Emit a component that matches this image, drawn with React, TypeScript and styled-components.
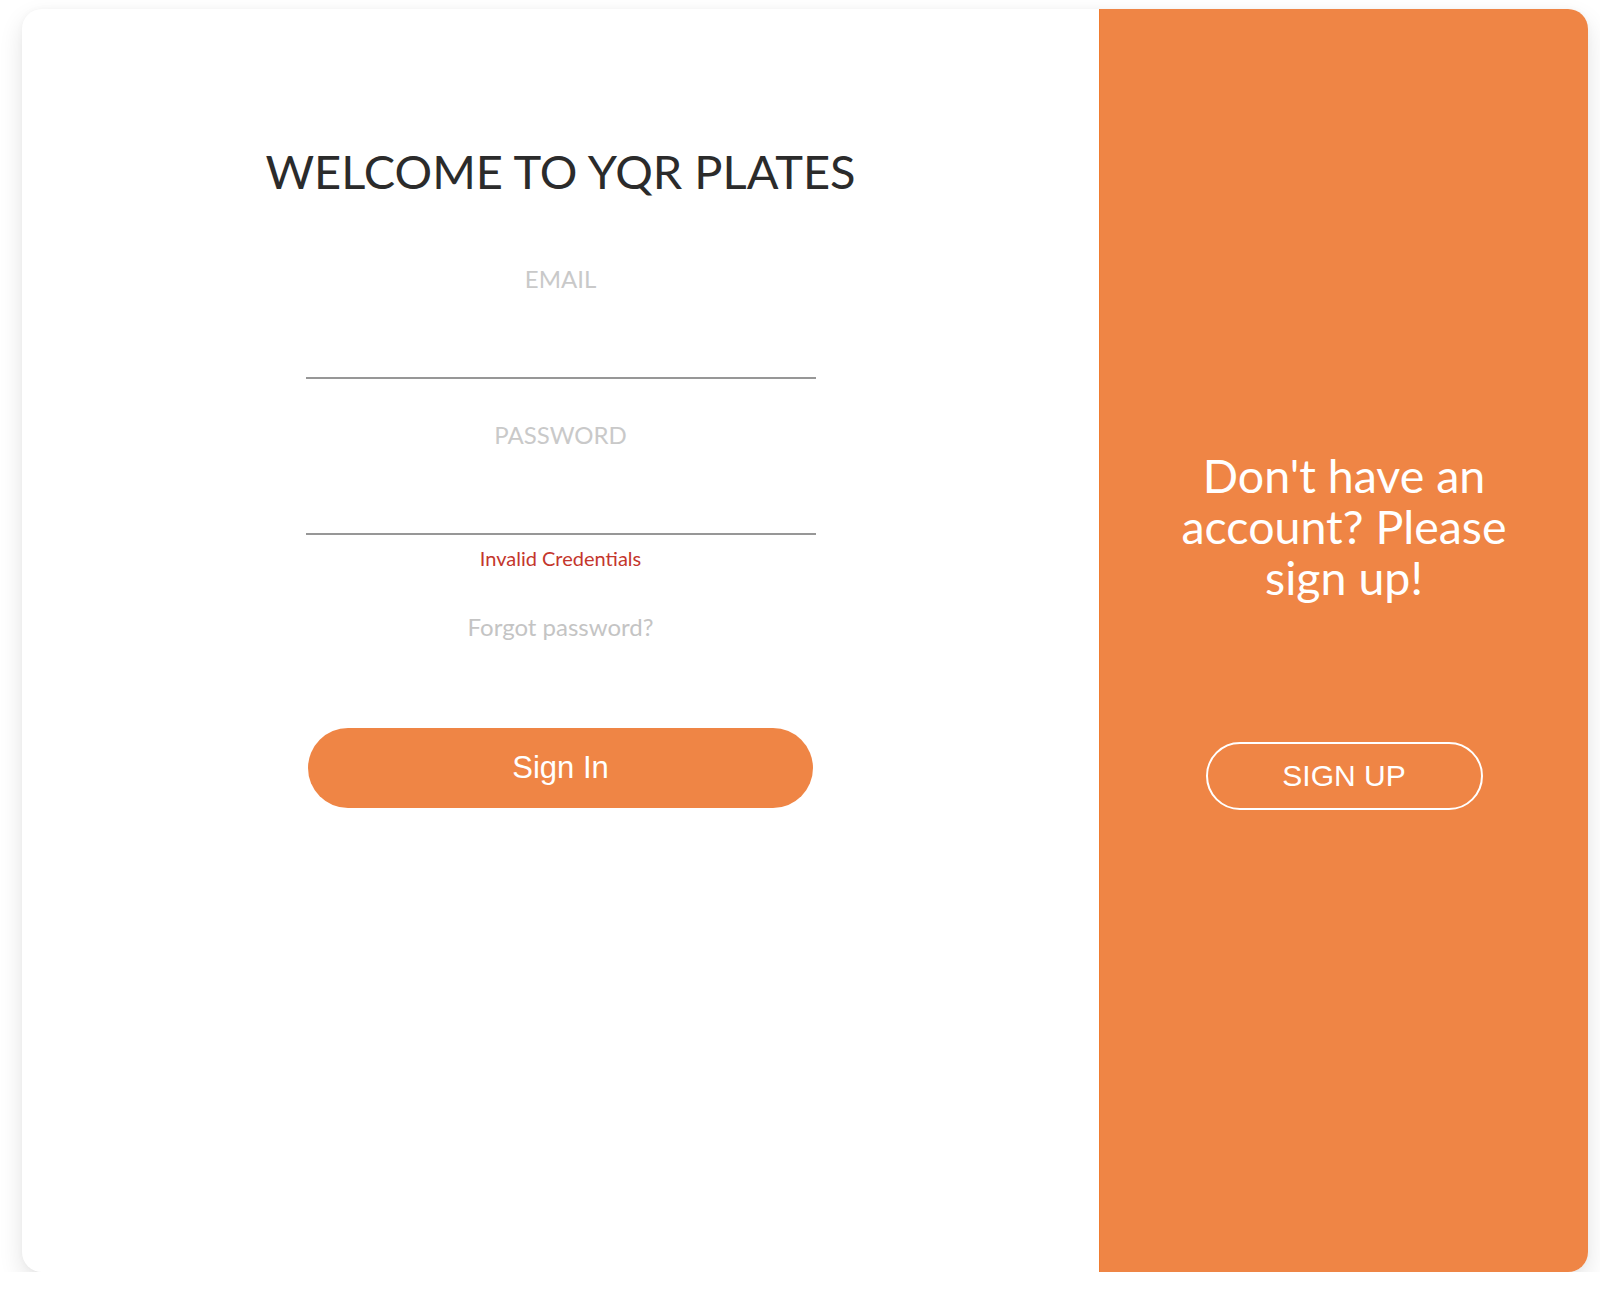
import React from "react";
import styled, { createGlobalStyle } from "styled-components";

const GlobalStyle = createGlobalStyle`
  html, body {
    margin: 0;
    padding: 0;
    background: #ffffff;
  }
  body {
    font-family: Lato, "Noto Sans", sans-serif;
  }
  * { box-sizing: border-box; }
`;

const Card = styled.div`
  display: flex;
  margin: 9px 12px 0 22px;
  height: 1263px;
  border-radius: 20px;
  overflow: hidden;
  background: #ffffff;
  box-shadow: 0 10px 24px rgba(0, 0, 0, 0.11), 0 0 6px rgba(0, 0, 0, 0.03);
`;

const SignInPane = styled.section`
  flex: 1;
  display: flex;
  flex-direction: column;
  align-items: center;
  padding-top: 134px;
`;

const Title = styled.h1`
  margin: 0 0 66px;
  font-family: Lato, sans-serif;
  font-weight: 400;
  font-size: 47px;
  line-height: 1.2;
  color: #2b2b2b;
`;

const Field = styled.label<{ $gap: number }>`
  display: flex;
  flex-direction: column;
  align-items: center;
  width: 510px;
  margin-top: ${(p) => p.$gap}px;
`;

const FieldLabel = styled.span`
  font-family: Lato, sans-serif;
  font-size: 24px;
  line-height: 1.2;
  color: #c9c9c9;
`;

const Input = styled.input`
  width: 100%;
  height: 85px;
  border: none;
  border-bottom: 2px solid #979797;
  background: transparent;
  outline: none;
  font-family: Lato, sans-serif;
  font-size: 22px;
  text-align: center;
`;

const ErrorText = styled.p`
  margin: 11px 0 0;
  font-family: Lato, sans-serif;
  font-size: 20px;
  line-height: 1.2;
  color: #c4362c;
`;

const ForgotLink = styled.a`
  margin-top: 43px;
  font-family: Lato, sans-serif;
  font-size: 24px;
  line-height: 1.2;
  color: #c4c4c4;
  text-decoration: none;
`;

const PrimaryButton = styled.button`
  margin-top: 86px;
  width: 505px;
  height: 80px;
  border: none;
  border-radius: 40px;
  background: #ef8545;
  color: #ffffff;
  font-family: "Liberation Sans", Arial, sans-serif;
  font-size: 31px;
  cursor: pointer;
`;

const SignUpPane = styled.aside`
  width: 489px;
  display: flex;
  flex-direction: column;
  align-items: center;
  padding-top: 441px;
  background: #ef8545;
  border-left: 1px solid #f07c30;
`;

const Promo = styled.h2`
  margin: 0;
  width: 350px;
  font-family: Lato, sans-serif;
  font-weight: 400;
  font-size: 46.5px;
  line-height: 51px;
  text-align: center;
  color: #ffffff;
`;

const OutlineButton = styled.button`
  margin-top: 139px;
  width: 277px;
  height: 68px;
  border: 2px solid #ffffff;
  border-radius: 34px;
  background: transparent;
  color: #ffffff;
  font-family: "Liberation Sans", Arial, sans-serif;
  font-size: 30px;
  cursor: pointer;
`;

export default function App() {
  return (
    <>
      <GlobalStyle />
      <Card>
        <SignInPane>
          <Title>WELCOME TO YQR PLATES</Title>
          <Field $gap={0}>
            <FieldLabel>EMAIL</FieldLabel>
            <Input type="email" />
          </Field>
          <Field $gap={42}>
            <FieldLabel>PASSWORD</FieldLabel>
            <Input type="password" />
          </Field>
          <ErrorText>Invalid Credentials</ErrorText>
          <ForgotLink href="#">Forgot password?</ForgotLink>
          <PrimaryButton>Sign In</PrimaryButton>
        </SignInPane>
        <SignUpPane>
          <Promo>Don't have an account? Please sign up!</Promo>
          <OutlineButton>SIGN UP</OutlineButton>
        </SignUpPane>
      </Card>
    </>
  );
}
